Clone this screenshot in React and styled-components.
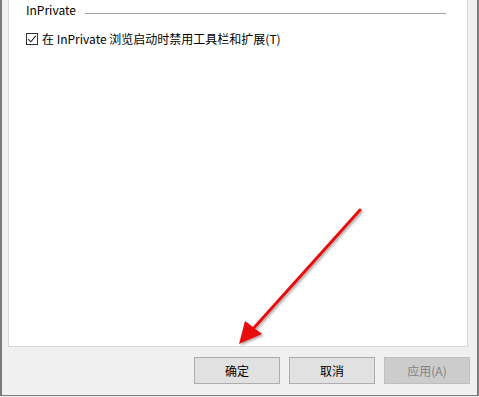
import React from "react";
import styled, { createGlobalStyle } from "styled-components";

const Global = createGlobalStyle`
  html, body { margin: 0; padding: 0; background: #f0f0f0; }
  body { font-family: "Noto Sans", "Noto Sans CJK SC", sans-serif; font-size: 12px; color: #000; }
`;

const Frame = styled.div`
  position: relative;
  box-sizing: border-box;
  width: 479px;
  height: 396px;
  background: #f0f0f0;
  border-left: 2px solid #7a7a7a;
  border-right: 2px solid #7a7a7a;
  border-bottom: 1px solid #7a7a7a;
  display: flex;
  flex-direction: column;
  padding: 0 9px 0 6px;
`;

const Panel = styled.div`
  box-sizing: border-box;
  height: 347px;
  background: #fff;
  border: 1px solid #d9d9d9;
  border-top: none;
  padding: 2px 21px 0 17px;
  display: flex;
  flex-direction: column;
`;

const GroupHead = styled.div`
  display: flex;
  align-items: center;
  gap: 9px;
  height: 16px;
`;

const GroupLabel = styled.span`
  line-height: 16px;
  font-family: "Noto Sans CJK SC", sans-serif;
  font-size: 12px;
`;

const GroupLine = styled.div`
  flex: 1;
  height: 1px;
  background: #a0a0a0;
  margin-top: 6px;
`;

const CheckRow = styled.label`
  display: flex;
  align-items: center;
  gap: 4px;
  margin-top: 13px;
  line-height: 16px;
  font-family: "Noto Sans CJK SC", sans-serif;
`;

const Box = styled.span`
  box-sizing: border-box;
  width: 12px;
  height: 12px;
  border: 1px solid #333;
  background: #fff;
  display: flex;
  align-items: center;
  justify-content: center;
`;

const Footer = styled.div`
  flex: 1;
  display: flex;
  justify-content: flex-end;
  align-items: flex-start;
  gap: 9px;
  padding-top: 10px;
  padding-right: 0;
  margin-right: -2px;
`;

const Button = styled.button`
  box-sizing: border-box;
  width: 86px;
  height: 27px;
  padding: 0;
  font-family: "Noto Sans CJK SC", sans-serif;
  font-size: 12px;
  background: ${(p) => (p.disabled ? "#cccccc" : "#e1e1e1")};
  border: 1px solid ${(p) => (p.disabled ? "#bfbfbf" : "#adadad")};
  color: ${(p) => (p.disabled ? "#838383" : "#000")};
`;

const Arrow = styled.svg`
  position: absolute;
  left: 0;
  top: 0;
  pointer-events: none;
`;

export default function App() {
  return (
    <>
      <Global />
      <Frame>
        <Panel>
          <GroupHead>
            <GroupLabel>InPrivate</GroupLabel>
            <GroupLine />
          </GroupHead>
          <CheckRow>
            <Box>
              <svg width="10" height="10" viewBox="0 0 10 10">
                <path d="M1.2 5.2 L3.8 7.8 L8.8 1.8" fill="none" stroke="#222" strokeWidth="1.1" />
              </svg>
            </Box>
            <span>在 InPrivate 浏览启动时禁用工具栏和扩展(T)</span>
          </CheckRow>
        </Panel>
        <Footer>
          <Button>确定</Button>
          <Button>取消</Button>
          <Button disabled>应用(A)</Button>
        </Footer>
        <Arrow width="479" height="397" viewBox="0 0 479 397">
          <defs>
            <filter id="sh" x="-20%" y="-20%" width="140%" height="140%">
              <feDropShadow dx="1.5" dy="1.5" stdDeviation="1.2" floodColor="#000" floodOpacity="0.35" />
            </filter>
          </defs>
          <g filter="url(#sh)">
            <line x1="358" y1="210" x2="250" y2="330" stroke="#e81010" strokeWidth="3" strokeLinecap="round" />
            <polygon points="237,344 243,321 260,334" fill="#e81010" />
          </g>
        </Arrow>
      </Frame>
    </>
  );
}
